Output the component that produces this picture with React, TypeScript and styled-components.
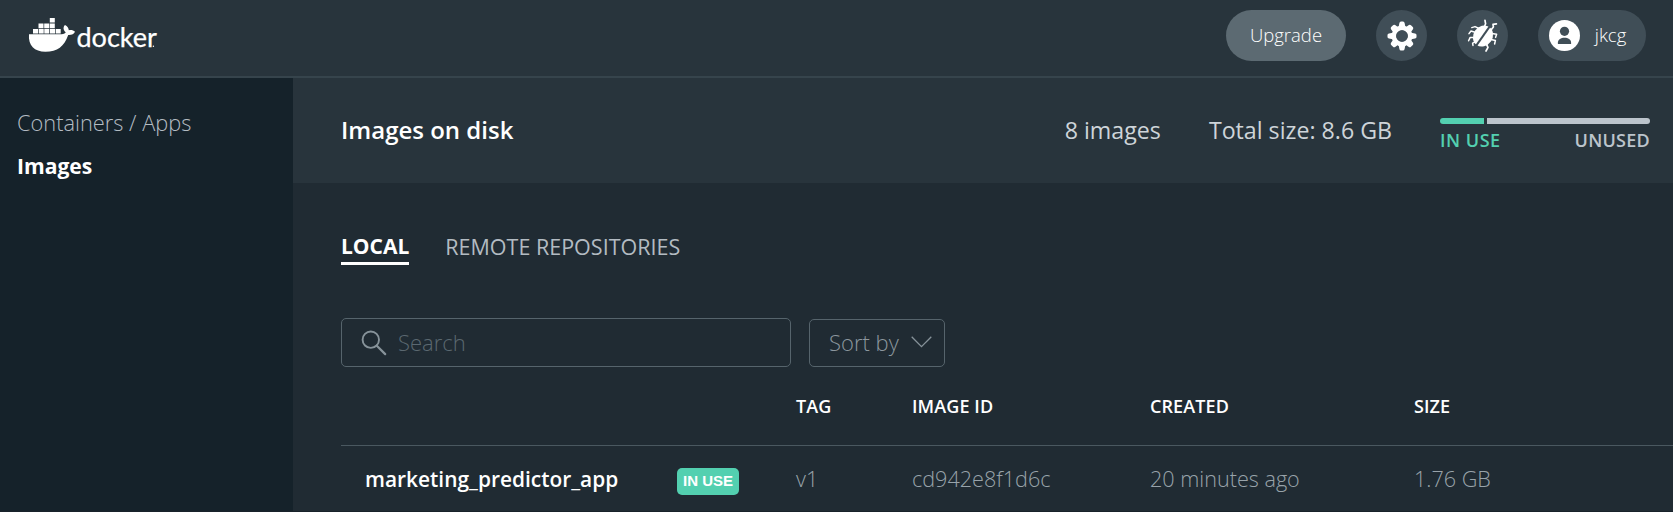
import React from "react";
import styled, { createGlobalStyle } from "styled-components";

const GlobalStyle = createGlobalStyle`
  *, *::before, *::after { box-sizing: border-box; }
  body {
    margin: 0;
    background: #202b33;
    font-family: "Open Sans", "Noto Sans", sans-serif;
    overflow: hidden;
  }
`;

const Page = styled.div`
  height: 512px;
  display: flex;
  flex-direction: column;
  border-bottom: 1px solid #18222a;
`;

const TopBar = styled.header`
  height: 78px;
  flex: none;
  display: flex;
  align-items: flex-start;
  justify-content: space-between;
  padding: 10px 27px 0 26px;
  background: #28343c;
  border-bottom: 2px solid #36444c;
`;

const Actions = styled.div`
  display: flex;
  gap: 30px;
`;

const Pill = styled.button<{ $bright?: boolean; $width: number }>`
  width: ${(p) => p.$width}px;
  height: 51px;
  display: flex;
  align-items: center;
  justify-content: center;
  padding: 0;
  border: 0;
  border-radius: 26px;
  background: ${(p) => (p.$bright ? "#5c6a72" : "#404e57")};
  color: #fff;
  font: 300 18.5px/48px "Open Sans", sans-serif;
`;

const PillText = styled.span`
  height: 51px;
  line-height: 49px;
`;

const Avatar = styled.svg`
  margin: 0 15px 0 -9px;
`;

const Body = styled.div`
  flex: 1;
  min-height: 0;
  display: flex;
`;

const Sidebar = styled.nav`
  width: 293px;
  flex: none;
  padding: 23px 17px 0;
  background: #15222a;
`;

const NavItem = styled.div<{ $active?: boolean }>`
  height: 43px;
  line-height: 43px;
  font-size: ${(p) => (p.$active ? 21.1 : 21.8)}px;
  font-weight: ${(p) => (p.$active ? 700 : 300)};
  color: ${(p) => (p.$active ? "#fff" : "#b4bcc3")};
`;

const Main = styled.main`
  flex: 1;
  min-width: 0;
  background: #202b33;
`;

const PageHeader = styled.div`
  height: 105px;
  display: flex;
  justify-content: space-between;
  padding: 0 23px 0 48px;
  background: #28343c;
`;

const Title = styled.h1`
  margin: 0;
  font-size: 24px;
  font-weight: 600;
  line-height: 104px;
  color: #fff;
`;

const Stats = styled.div`
  display: flex;
  gap: 48px;
`;

const Stat = styled.span`
  font-size: 23.2px;
  line-height: 105px;
  color: #ced4d9;
`;

const Usage = styled.div`
  width: 210px;
  padding-top: 40px;
`;

const UsageBar = styled.div`
  display: flex;
  gap: 3px;
  height: 6px;
`;

const UsageSegment = styled.div<{ $used?: boolean }>`
  flex: ${(p) => (p.$used ? "0 0 44px" : "1")};
  border-radius: ${(p) => (p.$used ? "3px 0 0 3px" : "0 3px 3px 0")};
  background: ${(p) => (p.$used ? "#53d0b0" : "#bcc4cc")};
`;

const UsageLabels = styled.div`
  display: flex;
  justify-content: space-between;
  margin-top: 4px;
  font-size: 18px;
  font-weight: 600;
  line-height: 24px;
`;

const UsageLabel = styled.span<{ $used?: boolean }>`
  color: ${(p) => (p.$used ? "#53d0b0" : "#bcc4cc")};
  letter-spacing: ${(p) => (p.$used ? 0.5 : 0.25)}px;
`;

const Content = styled.div`
  padding: 47px 0 0 48px;
`;

const Tabs = styled.div`
  display: flex;
  gap: 36px;
`;

const Tab = styled.div<{ $active?: boolean }>`
  height: 35px;
  line-height: ${(p) => (p.$active ? 32 : 33)}px;
  font-size: ${(p) => (p.$active ? 21 : 21.5)}px;
  font-weight: ${(p) => (p.$active ? 700 : 400)};
  color: ${(p) => (p.$active ? "#fff" : "#b3bbc2")};
  border-bottom: 3px solid ${(p) => (p.$active ? "#fff" : "transparent")};
`;

const Filters = styled.div`
  display: flex;
  align-items: flex-end;
  gap: 18px;
  margin-top: 53px;
`;

const SearchBox = styled.label`
  width: 450px;
  height: 49px;
  display: flex;
  align-items: center;
  padding-left: 19px;
  border: 1px solid #56646c;
  border-radius: 5px;
`;

const SearchInput = styled.input`
  flex: 1;
  min-width: 0;
  margin-left: 11px;
  padding: 0;
  border: 0;
  outline: 0;
  background: transparent;
  font: 300 22px/47px "Open Sans", sans-serif;
  &::placeholder { color: #5b6870; opacity: 1; }
`;

const SortButton = styled.button`
  width: 136px;
  height: 48px;
  display: flex;
  align-items: center;
  justify-content: space-between;
  padding: 0 12px 2px 19px;
  border: 1px solid #56646c;
  border-radius: 5px;
  background: transparent;
  color: #8c979e;
  font: 300 22px/44px "Open Sans", sans-serif;
`;

const Row = styled.div`
  display: grid;
  grid-template-columns: 336px 119px 116px 238px 1fr 259px;
  align-items: center;
`;

const HeadRow = styled(Row)`
  height: 79px;
  border-bottom: 1px solid #4a5860;
  font-size: 18px;
  font-weight: 600;
  letter-spacing: 0.1px;
  color: #fff;
`;

const ImageRow = styled(Row)`
  height: 65px;
  font-size: 21.6px;
  font-weight: 300;
  color: #98a3aa;
`;

const ImageName = styled.span`
  padding-left: 24px;
  font-size: 20.9px;
  font-weight: 600;
  color: #fff;
`;

const Badge = styled.span`
  justify-self: start;
  width: 62px;
  height: 27px;
  margin-top: 6px;
  border-radius: 5px;
  background: #53d0b0;
  color: #fff;
  font: 700 15px/26px "Liberation Sans", Arial, sans-serif;
  text-align: center;
`;

const DockerLogo = () => (
  <svg width="136" height="50" viewBox="26 10 136 50" fill="#fff" aria-label="docker">
    <path d="M49.8 18h5v4.6h-5zM38.5 23.6h5v4.6h-5zM44.2 23.6h5v4.6h-5zM49.8 23.6h5v4.6h-5zM33 29.1h5v4.3h-5zM38.7 29.1h5v4.3h-5zM44.3 29.1h5v4.3h-5zM50 29.1h5v4.3h-5zM55.7 29.1h5v4.3h-5z" />
    <path d="M29 34.2H61.5C64 34.2 65.4 33.4 65.7 32.3C63.2 30 62.8 27 65 24.9C67.4 26.2 68.7 28 68.8 30.3C71.3 29.8 73.4 30.3 75 31.7C73.8 34.1 71.6 35.2 68.2 35C64.2 46.5 57.5 51.7 45.4 51.7C34.5 51.7 28 45.5 29 34.2Z" />
    <text x="76.4" y="47.3" fontFamily="Lato, sans-serif" fontSize="26" textLength="80.6" lengthAdjust="spacingAndGlyphs" stroke="#fff" strokeWidth="0.25">docker</text>
    <circle cx="153.4" cy="46.3" r="0.7" />
  </svg>
);

const GearIcon = () => (
  <svg width="30" height="30" viewBox="-15 -15 30 30">
    <g fill="#fff">
      {[0, 90, 180, 270].map((a) => (
        <path key={a} transform={`rotate(${a})`} d="M-3.6-8L-2.6-13Q-2.3-14.5-1-14.5H1Q2.3-14.5 2.6-13L3.6-8Z" />
      ))}
      {[45, 135, 225, 315].map((a) => (
        <path key={a} transform={`rotate(${a})`} d="M-3.7-8L-2.9-12.6Q-2.6-14-1.3-14H1.3Q2.6-14 2.9-12.6L3.7-8Z" />
      ))}
    </g>
    <circle r="8.1" fill="none" stroke="#fff" strokeWidth="4.6" />
    <circle r="5.8" fill="#404e57" />
  </svg>
);

const BugIcon = () => (
  <svg width="34" height="34" viewBox="-17 -17 34 34">
    <g transform="rotate(35)">
      <ellipse rx="9.6" ry="11" fill="#fff" />
      <rect x="-1" y="-13" width="2" height="26" fill="#404e57" />
    </g>
    <g fill="none" stroke="#fff" strokeWidth="1.5" strokeLinecap="round" strokeLinejoin="round">
      <path d="M1.3-9L2.6-12.2L2-15.6" strokeWidth="1.7" />
      <path d="M8-6L10.4-9L10-11.6L13.4-12.2" strokeWidth="1.7" />
      <path d="M8.8-2.4L13.6-1.8L12.6 1.4" />
      <path d="M8 3.4L12.4 4.4L11.6 8" />
      <path d="M3.5 8.5L5 11.4L3 15" strokeWidth="1.7" />
      <path d="M-5-8L-8-9.4L-11.2-8.4" />
      <path d="M-8-3.8L-12-5L-14-2.4" />
      <path d="M-9 1.4L-12.8 1.4L-14.4 4.8" />
      <path d="M-7.6 5.8L-10.4 7.2L-10 9.4" />
    </g>
  </svg>
);

const SearchIcon = () => (
  <svg width="26" height="26" viewBox="361 329.5 26 26" fill="none" stroke="#87939a" strokeWidth="1.9" strokeLinecap="round">
    <circle cx="370.8" cy="339.2" r="8.2" />
    <path d="M376.8 345.2L385.2 353.6" strokeWidth="2.2" />
  </svg>
);

const ChevronIcon = () => (
  <svg width="21" height="12" viewBox="0 0 21 12" fill="none" stroke="#87939a" strokeWidth="1.3">
    <path d="M0.7 0.8L10.5 10.6L20.3 0.8" />
  </svg>
);

export default function App() {
  return (
    <Page>
      <GlobalStyle />
      <TopBar>
        <DockerLogo />
        <Actions>
          <Pill $bright $width={120}><PillText>Upgrade</PillText></Pill>
          <Pill $width={51} aria-label="Settings"><GearIcon /></Pill>
          <Pill $width={51} aria-label="Troubleshoot"><BugIcon /></Pill>
          <Pill $width={108}>
            <Avatar width="31" height="31" viewBox="0 0 31 31">
              <circle cx="15.5" cy="15.5" r="15.5" fill="#fff" />
              <circle cx="15.5" cy="11.3" r="4.6" fill="#404e57" />
              <path d="M8.9 24V22.5C8.9 19.5 12 17.8 15.5 17.8S22.1 19.5 22.1 22.5V24Z" fill="#404e57" />
            </Avatar>
            <PillText>jkcg</PillText>
          </Pill>
        </Actions>
      </TopBar>
      <Body>
        <Sidebar>
          <NavItem>Containers / Apps</NavItem>
          <NavItem $active>Images</NavItem>
        </Sidebar>
        <Main>
          <PageHeader>
            <Title>Images on disk</Title>
            <Stats>
              <Stat>8 images</Stat>
              <Stat>Total size: 8.6 GB</Stat>
              <Usage>
                <UsageBar>
                  <UsageSegment $used />
                  <UsageSegment />
                </UsageBar>
                <UsageLabels>
                  <UsageLabel $used>IN USE</UsageLabel>
                  <UsageLabel>UNUSED</UsageLabel>
                </UsageLabels>
              </Usage>
            </Stats>
          </PageHeader>
          <Content>
            <Tabs>
              <Tab $active>LOCAL</Tab>
              <Tab>REMOTE REPOSITORIES</Tab>
            </Tabs>
            <Filters>
              <SearchBox>
                <SearchIcon />
                <SearchInput placeholder="Search" />
              </SearchBox>
              <SortButton>
                Sort by
                <ChevronIcon />
              </SortButton>
            </Filters>
            <HeadRow>
              <span />
              <span />
              <span>TAG</span>
              <span>IMAGE ID</span>
              <span>CREATED</span>
              <span>SIZE</span>
            </HeadRow>
            <ImageRow>
              <ImageName>marketing_predictor_app</ImageName>
              <Badge>IN USE</Badge>
              <span>v1</span>
              <span>cd942e8f1d6c</span>
              <span>20 minutes ago</span>
              <span>1.76 GB</span>
            </ImageRow>
          </Content>
        </Main>
      </Body>
    </Page>
  );
}
